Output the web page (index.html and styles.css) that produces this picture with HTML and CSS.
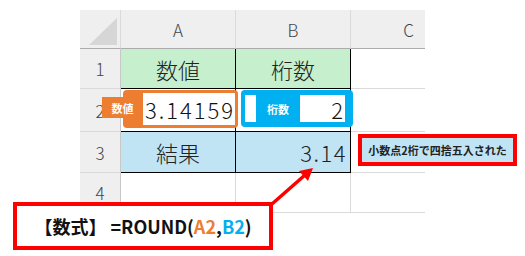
FILE: index.html
```html
<!DOCTYPE html>
<html lang="ja">
<head>
  <meta charset="UTF-8" />
  <title>ROUND関数</title>
  <link rel="stylesheet" href="styles.css">
</head>
<body>

  <div class="sheet">
    <div class="grid">
      <div class="corner"></div>
      <div class="colhead">A</div>
      <div class="colhead">B</div>
      <div class="colhead">C</div>

      <div class="rowhead">1</div>
      <div class="cell t green">数値</div>
      <div class="cell t green">桁数</div>
      <div class="cell"></div>

      <div class="rowhead">2</div>
      <div class="cell t top">
        <div class="hl-orange">
          <span class="tag">数値</span>
          <div class="val">3.14159</div>
        </div>
      </div>
      <div class="cell t top">
        <div class="hl-blue">
          <div class="sliver"></div>
          <div class="tag-in">桁数</div>
          <div class="val">2</div>
        </div>
      </div>
      <div class="cell"></div>

      <div class="rowhead">3</div>
      <div class="cell t blue">結果</div>
      <div class="cell t blue right">3.14</div>
      <div class="cell"></div>

      <div class="rowhead">4</div>
      <div class="cell"></div>
      <div class="cell"></div>
      <div class="cell"></div>
    </div>
  </div>

  <div class="note">小数点2桁で四捨五入された</div>

  <svg class="arrow" width="525" height="256" viewBox="0 0 525 256">
    <line x1="272" y1="204" x2="305" y2="175" stroke="#ff0000" stroke-width="3.5" />
    <polygon points="313,168 308,181 299,171" fill="#ff0000" />
  </svg>

  <div class="formula">【数式】 =ROUND(<span class="a">A2</span>,<span class="b">B2</span>)</div>

</body>
</html>
```

FILE: styles.css
```css
body {
  margin: 0;
  background: #fff;
  font-family: "Noto Sans CJK JP", sans-serif;
  position: relative;
  width: 525px;
  height: 256px;
  overflow: hidden;
}

.sheet {
  margin: 10px 0 0 80px;
  width: 345px;
  overflow: hidden;
}

.grid {
  display: grid;
  grid-template-columns: 41px 115px 115px 116px;
  grid-template-rows: 39px 40px 43px 41px 40px;
  width: 387px;
}

.grid > div {
  box-sizing: border-box;
  display: flex;
  align-items: center;
  justify-content: center;
  border-right: 1px solid #dadada;
  border-bottom: 1px solid #dadada;
}

.corner,
.colhead,
.rowhead {
  background: #efefef;
  color: #444;
  font-size: 17px;
  font-weight: 300;
}

.colhead {
  border-bottom-color: #acacac !important;
}

.corner {
  border-bottom-color: #acacac !important;
  justify-content: flex-end !important;
  align-items: flex-end !important;
  padding: 0 3px 3px 0;
}

.corner::after {
  content: "";
  width: 28px;
  height: 27px;
  background: #d6d6d6;
  clip-path: polygon(100% 0, 100% 100%, 0 100%);
}

.rowhead {
  border-right-color: #c8c8c8 !important;
}

.cell.t {
  border-right: 1px solid #000;
  border-bottom: 1px solid #000;
  font-size: 22px;
  font-weight: 300;
  color: #222;
}

.green {
  background: #c6efce;
}

.blue {
  background: #c1e4f5;
}

.right {
  justify-content: flex-end !important;
  padding-right: 3px;
  letter-spacing: 1.5px;
}

.top {
  align-items: flex-start !important;
  position: relative;
}

/* highlighted input cells */
.hl-orange,
.hl-blue {
  flex: 1;
  display: flex;
  border-radius: 4px;
  margin-top: 1px;
}

.hl-orange {
  position: relative;
  background: #ed7d31;
  height: 38px;
  box-sizing: border-box;
  padding: 3px 3px 3px 20px;
  margin-left: 2px;
  margin-right: -3px;
}

.hl-orange .tag {
  position: absolute;
  left: -21px;
  top: 7px;
  width: 41px;
  height: 21px;
  background: #ed7d31;
  color: #fff;
  font-size: 11px;
  font-weight: bold;
  display: flex;
  align-items: center;
  justify-content: center;
}

.hl-blue {
  background: #00b0f0;
  height: 37px;
  box-sizing: border-box;
  padding: 5px 8px 5px 4px;
  margin-left: 5px;
  margin-right: -3px;
}

.hl-blue .sliver {
  width: 11px;
  background: #fff;
}

.hl-blue .tag-in {
  width: 44px;
  color: #fff;
  font-size: 11px;
  font-weight: bold;
  display: flex;
  align-items: center;
  justify-content: center;
}

.val {
  flex: 1;
  background: #fff;
  color: #111;
  font-size: 22px;
  font-weight: 300;
  letter-spacing: 2px;
  display: flex;
  align-items: center;
  justify-content: flex-end;
  padding-right: 0;
}

/* callouts */
.note {
  position: absolute;
  left: 358px;
  top: 134px;
  width: 159px;
  height: 32px;
  box-sizing: border-box;
  border: 4px solid #ff0000;
  background: #c1e4f5;
  color: #222;
  font-size: 11px;
  font-weight: bold;
  display: flex;
  align-items: center;
  justify-content: center;
}

.arrow {
  position: absolute;
  left: 0;
  top: 0;
}

.formula {
  position: absolute;
  left: 13px;
  top: 202px;
  width: 260px;
  height: 48px;
  box-sizing: border-box;
  border: 4px solid #ff0000;
  background: #fff;
  color: #111;
  font-size: 18px;
  font-weight: bold;
  display: flex;
  align-items: center;
  justify-content: center;
}

.formula .a {
  color: #ed7d31;
}

.formula .b {
  color: #00b0f0;
}
```
